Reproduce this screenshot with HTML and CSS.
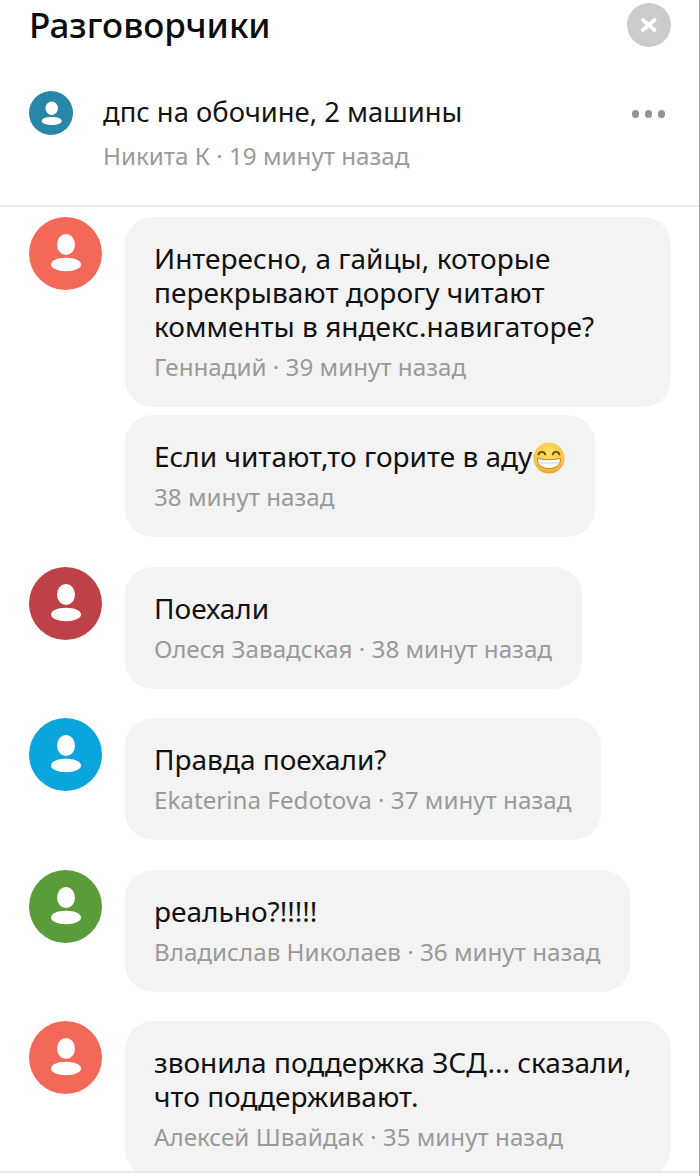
FILE: index.html
```html
<!DOCTYPE html>
<html lang="ru">
<head>
<meta charset="utf-8">
<title>Разговорчики</title>
<link rel="stylesheet" href="styles.css">
</head>
<body>
<svg class="defs" width="0" height="0" aria-hidden="true">
  <defs>
    <symbol id="user" viewBox="0 0 73 73">
      <ellipse cx="37" cy="27.5" rx="9" ry="10.5" fill="#fff"/>
      <path d="M22 47.5c0-3.900 6.500-6.700 15-6.700s15 2.800 15 6.700-6.500 6.700-15 6.700-15-2.800-15-6.700z" fill="#fff"/>
    </symbol>
    <symbol id="user-small" viewBox="0 0 44 44">
      <ellipse cx="22.700" cy="17.300" rx="6.200" ry="6.700" fill="#fff"/>
      <path d="M12.700 30c0-2.400 4.500-3.900 10-3.900s10 1.500 10 3.900-4.500 4-10 4-10-1.600-10-4z" fill="#fff"/>
    </symbol>
    <radialGradient id="face" cx="50%" cy="35%" r="70%">
      <stop offset="0" stop-color="#fde25e"/>
      <stop offset=".7" stop-color="#f9c540"/>
      <stop offset="1" stop-color="#e8912a"/>
    </radialGradient>
  </defs>
</svg>
<div class="page">
  <header class="top">
    <div class="title-row">
      <h1 class="title">Разговорчики</h1>
      <button class="close" aria-label="Закрыть">
        <svg viewBox="0 0 44 44" width="44" height="44"><path d="M16 17l11.500 10m0-10l-11.500 10" stroke="#fff" stroke-width="4" stroke-linecap="round" fill="none"/></svg>
      </button>
    </div>
    <div class="post">
      <svg class="avatar-small teal"><use href="#user-small"/></svg>
      <div class="post-body">
        <div class="post-text">дпс на обочине, 2 машины</div>
        <div class="meta post-meta">Никита К · 19 минут назад</div>
      </div>
      <div class="dots"><i></i><i></i><i></i></div>
    </div>
  </header>
  <main class="list">
    <section class="thread">
      <svg class="avatar coral"><use href="#user"/></svg>
      <div class="bubbles">
        <div class="bubble wide">
          <p class="text">Интересно, а гайцы, которые<br>перекрывают дорогу читают<br>комменты в яндекс.навигаторе?</p>
          <div class="meta">Геннадий · 39 минут назад</div>
        </div>
        <div class="bubble">
          <p class="text">Если читают,то горите в аду<svg class="emoji" viewBox="0 0 32 32"><circle cx="16" cy="16" r="15.5" fill="url(#face)"/><path d="M5.500 12.500c1-3.600 5.600-3.600 6.800 0M19.700 12.500c1-3.600 5.600-3.600 6.800 0" stroke="#6b4316" stroke-width="1.800" fill="none" stroke-linecap="round"/><path d="M4.500 16.500c7 1.600 16 1.600 23 0 .4 6.600-5 10-11.500 10s-11.900-3.400-11.500-10z" fill="#fff" stroke="#a8701f" stroke-width=".8"/><path d="M5 21h22" stroke="#cfcfcf" stroke-width="1"/></svg></p>
          <div class="meta">38 минут назад</div>
        </div>
      </div>
    </section>
    <section class="thread">
      <svg class="avatar crimson"><use href="#user"/></svg>
      <div class="bubbles">
        <div class="bubble">
          <p class="text">Поехали</p>
          <div class="meta">Олеся Завадская · 38 минут назад</div>
        </div>
      </div>
    </section>
    <section class="thread">
      <svg class="avatar sky"><use href="#user"/></svg>
      <div class="bubbles">
        <div class="bubble">
          <p class="text">Правда поехали?</p>
          <div class="meta">Ekaterina Fedotova · 37 минут назад</div>
        </div>
      </div>
    </section>
    <section class="thread">
      <svg class="avatar green"><use href="#user"/></svg>
      <div class="bubbles">
        <div class="bubble">
          <p class="text">реально?!!!!!</p>
          <div class="meta">Владислав Николаев · 36 минут назад</div>
        </div>
      </div>
    </section>
    <section class="thread">
      <svg class="avatar coral"><use href="#user"/></svg>
      <div class="bubbles">
        <div class="bubble wide">
          <p class="text">звонила поддержка ЗСД... сказали,<br>что поддерживают.</p>
          <div class="meta">Алексей Швайдак · 35 минут назад</div>
        </div>
      </div>
    </section>
  </main>
</div>
</body>
</html>
```

FILE: styles.css
```css
* { box-sizing: border-box; }
html, body { margin: 0; height: 100%; background: #fff; }
body { overflow: hidden; font-family: "Noto Sans", Roboto, sans-serif; color: #111; border-right: 1px solid #a8a8a8; }
.defs { position: absolute; }
.page { height: 1173px; display: flex; flex-direction: column; overflow: hidden; border-bottom: 2px solid #eaeaea; }

.top { flex: none; height: 207px; border-bottom: 2px solid #e9e9e9; padding: 3px 28px 0 29px; }
.title-row { display: flex; justify-content: space-between; align-items: center; height: 44px; }
.title { margin: 0; font-size: 35px; line-height: 44px; font-weight: 500; color: #0c0c0c; }
.close { width: 44px; height: 44px; padding: 0; border: 0; border-radius: 50%; background: #cbcbcb; display: block; }
.close svg { display: block; }

.post { display: flex; align-items: flex-start; margin-top: 44px; }
.avatar-small { flex: none; width: 44px; height: 44px; border-radius: 50%; }
.post-body { flex: 1; margin-left: 30px; }
.post-text { font-size: 27.4px; line-height: 34px; margin-top: 4px; color: #151515; }
.dots { display: flex; gap: 5.5px; margin-top: 19px; margin-right: 6px; }
.dots i { width: 7.500px; height: 7.500px; border-radius: 50%; background: #959595; display: block; }

.list { flex: 1; padding: 10px 28px 0 29px; display: flex; flex-direction: column; gap: 29.6px; overflow: hidden; min-height: 0; }
.thread { display: flex; flex: none; gap: 23px; align-items: flex-start; }
.avatar { flex: none; width: 73px; height: 73px; border-radius: 50%; }
.coral { background: #f4685a; }
.crimson { background: #bd4146; }
.sky { background: #0aa5dc; }
.green { background: #5a9c3a; }
.teal { background: #2a86a8; }

.bubbles { display: flex; flex-direction: column; align-items: flex-start; gap: 8px; flex: 1; min-width: 0; }
.bubble { background: #f3f3f3; border-radius: 28px; padding: 24px 30px 23px 29px; }
.bubble.wide { width: 100%; }
.text { margin: 0; font-size: 28px; line-height: 34px; color: #111; }
.meta { margin-top: 7px; font-size: 24.2px; line-height: 34px; color: #9a9a9a; }
.post-meta { margin-top: 10px; }
.emoji { width: 32px; height: 32px; margin: 0 0 -2px 1px; vertical-align: -5px; }
```
